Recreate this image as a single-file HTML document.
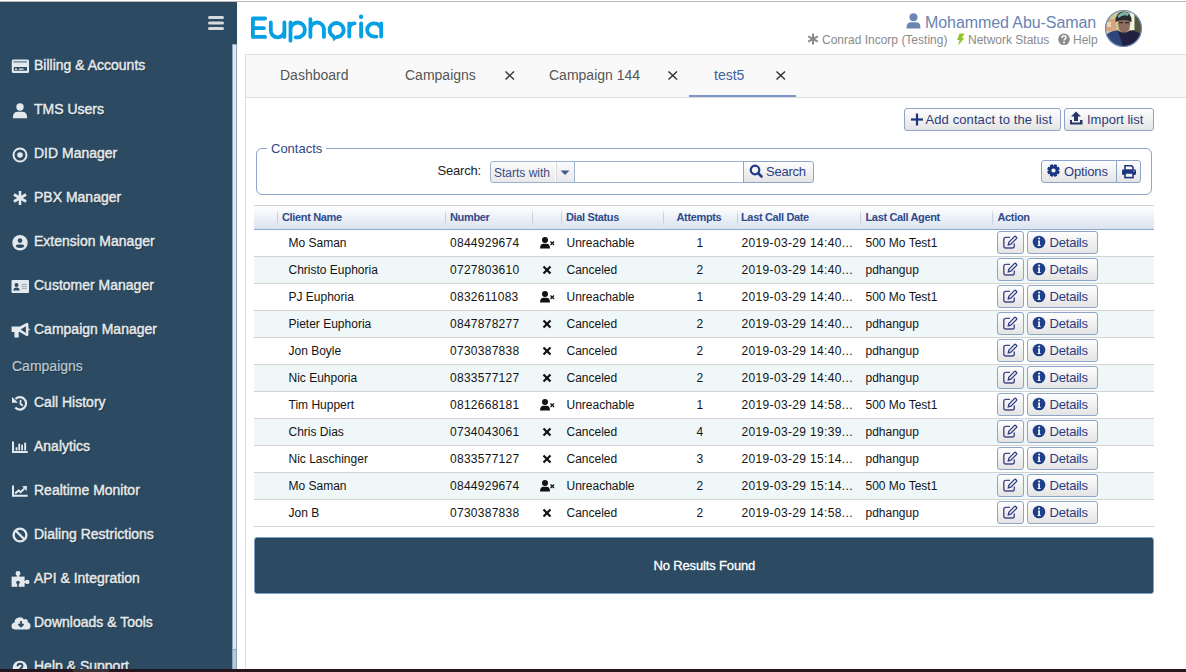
<!DOCTYPE html>
<html><head><meta charset="utf-8"><style>
*{box-sizing:border-box;margin:0;padding:0}
html,body{width:1186px;height:672px;overflow:hidden;background:#fff;font-family:"Liberation Sans",sans-serif}
body{position:relative}
.abs{position:absolute;white-space:nowrap}
svg{position:absolute;overflow:visible}
.mi{position:absolute;white-space:nowrap;color:#e4e9ed;text-shadow:1px 1px 1px rgba(0,0,0,.45);-webkit-text-stroke:0.45px #e4e9ed}
.btn{position:absolute;border:1px solid #8ea5c9;border-radius:3px;background:linear-gradient(#fefefe,#e4e4e4)}
.tx{color:#3a3f6e}
.th{position:absolute;white-space:nowrap;font-weight:bold;color:#2f4a8a;letter-spacing:-0.35px}
.sep{position:absolute;top:209px;width:1px;height:18px;background:linear-gradient(rgba(200,210,225,0),#c5cedb 35%,#c5cedb 65%,rgba(200,210,225,0))}
.row{position:absolute;left:254px;width:900px;height:27px;border-bottom:1px solid #d3d3d3}
.alt{background:#eff7f9}
.td{position:absolute;white-space:nowrap;color:#141414}
</style></head><body>
<div class="abs" style="left:0;top:1px;width:1186px;height:1px;background:#b9b6b9"></div>
<div class="abs" style="left:0;top:2px;width:237px;height:667px;background:#2c4b62"></div>
<svg style="left:206px;top:14px" width="20" height="18"><g stroke="#d5dadd" stroke-width="3" stroke-linecap="round"><line x1="3.5" y1="3.5" x2="16.5" y2="3.5"/><line x1="3.5" y1="9" x2="16.5" y2="9"/><line x1="3.5" y1="14.5" x2="16.5" y2="14.5"/></g></svg>
<div class="abs" style="left:232px;top:44px;width:5px;height:625px;background:#e8e6e7;border:1px solid #87a6bd;border-bottom:none"></div>
<div class="abs" style="left:233px;top:649px;width:3px;height:20px;background:#b8c9d5;border-top:1px solid #87a6bd"></div>
<svg style="left:11px;top:59px" width="19" height="15"><rect x="0.8" y="0.6" width="17.2" height="13.3" rx="1.5" fill="#e4e9ed"/><rect x="2.5" y="2.1" width="13.5" height="1.6" fill="#2c4b62" opacity="0.55"/><rect x="2.8" y="8" width="13.2" height="3.7" fill="#2c4b62"/><rect x="3.9" y="9.5" width="2.4" height="1.3" fill="#e4e9ed"/><rect x="8" y="9.5" width="4.5" height="1.3" fill="#e4e9ed"/></svg>
<div class="mi" style="left:34px;top:58px;font-size:14px;line-height:14px;">Billing &amp; Accounts</div>
<svg style="left:11px;top:103px" width="19" height="15"><circle cx="9" cy="4" r="3.7" fill="#e4e9ed"/><path d="M1.8 15.3 Q1.8 8.7 6.3 8.7 L11.7 8.7 Q16.2 8.7 16.2 15.3 Z" fill="#e4e9ed"/></svg>
<div class="mi" style="left:34px;top:102px;font-size:14px;line-height:14px;">TMS Users</div>
<svg style="left:11px;top:146.5px" width="19" height="16"><circle cx="9" cy="8" r="6.5" fill="none" stroke="#e4e9ed" stroke-width="2"/><circle cx="9" cy="8" r="2.8" fill="#e4e9ed"/></svg>
<div class="mi" style="left:34px;top:146px;font-size:14px;line-height:14px;">DID Manager</div>
<svg style="left:11px;top:190px" width="19" height="16"><g stroke="#e4e9ed" stroke-width="2.6" stroke-linecap="butt"><line x1="9" y1="1" x2="9" y2="15"/><line x1="2.9" y1="4.5" x2="15.1" y2="11.5"/><line x1="2.9" y1="11.5" x2="15.1" y2="4.5"/></g></svg>
<div class="mi" style="left:34px;top:190px;font-size:14px;line-height:14px;">PBX Manager</div>
<svg style="left:11px;top:234.5px" width="19" height="16"><circle cx="9" cy="7.7" r="7.7" fill="#e4e9ed"/><circle cx="9" cy="5.6" r="2.3" fill="#2c4b62"/><path d="M4.6 11.4 Q5 9.4 7 9.4 L11 9.4 Q13 9.4 13.4 11.4 Q9 14.5 4.6 11.4Z" fill="#2c4b62"/></svg>
<div class="mi" style="left:34px;top:234px;font-size:14px;line-height:14px;">Extension Manager</div>
<svg style="left:11px;top:279.5px" width="19" height="14"><rect x="0.5" y="0" width="17.5" height="13" rx="1" fill="#e4e9ed"/><circle cx="5.5" cy="5" r="2" fill="#2c4b62"/><path d="M2.2 10.5 Q2.5 7.5 5.5 7.5 Q8.5 7.5 8.8 10.5Z" fill="#2c4b62"/><rect x="10.5" y="3.8" width="5.5" height="1.2" fill="#a8b4be"/><rect x="10.5" y="5.8" width="5.5" height="1.2" fill="#a8b4be"/><rect x="10.5" y="7.8" width="5.5" height="1.2" fill="#a8b4be"/></svg>
<div class="mi" style="left:34px;top:278px;font-size:14px;line-height:14px;">Customer Manager</div>
<svg style="left:11px;top:322px" width="19" height="17"><path d="M0.6 4.4 L8.8 4.4 L15.5 1 Q17.4 0.4 17.4 2.5 L17.4 12.4 Q17.4 14.5 15.5 13.9 L8.8 9.9 L7.7 9.9 L7.7 15.6 L3.4 15.6 L3.4 9.9 L0.6 9.9 Z" fill="#e4e9ed"/><circle cx="17.9" cy="7.5" r="0.9" fill="#e4e9ed"/><path d="M9.6 7.4 L14.9 4.3 L14.9 10.9 Z" fill="#2c4b62"/></svg>
<div class="mi" style="left:34px;top:322px;font-size:14px;line-height:14px;">Campaign Manager</div>
<svg style="left:11px;top:395px" width="19" height="17"><path d="M4.5 4.0 A6.2 6.2 0 1 1 4.3 12.6" fill="none" stroke="#e4e9ed" stroke-width="2.2"/><path d="M1 2 L7 7.8 L1 7.8Z" fill="#e4e9ed"/><path d="M9.5 5 L9.5 9 L11.9 10.8" fill="none" stroke="#e4e9ed" stroke-width="1.7"/></svg>
<div class="mi" style="left:34px;top:395px;font-size:14px;line-height:14px;">Call History</div>
<svg style="left:11px;top:440px" width="19" height="15"><path d="M2 1.6 L2 12 L16.7 12" fill="none" stroke="#e4e9ed" stroke-width="2"/><rect x="4.6" y="7.2" width="1.8" height="3.2" fill="#e4e9ed"/><rect x="7.3" y="3.7" width="1.8" height="6.7" fill="#e4e9ed"/><rect x="10.2" y="4.7" width="1.8" height="5.7" fill="#e4e9ed"/><rect x="13.2" y="2.7" width="1.9" height="7.7" fill="#e4e9ed"/></svg>
<div class="mi" style="left:34px;top:439px;font-size:14px;line-height:14px;">Analytics</div>
<svg style="left:11px;top:484px" width="19" height="15"><path d="M2 1.6 L2 11.8 L16.7 11.8" fill="none" stroke="#e4e9ed" stroke-width="2"/><path d="M4.1 9.6 L7.6 6.6 L9.7 8.1 L13.2 4.6" fill="none" stroke="#e4e9ed" stroke-width="2"/><path d="M11 2.3 L16 1.9 L15.6 6.9Z" fill="#e4e9ed"/></svg>
<div class="mi" style="left:34px;top:483px;font-size:14px;line-height:14px;">Realtime Monitor</div>
<svg style="left:11px;top:527px" width="19" height="16"><circle cx="9" cy="8" r="6.4" fill="none" stroke="#e4e9ed" stroke-width="2.4"/><line x1="4.5" y1="3.5" x2="13.5" y2="12.5" stroke="#e4e9ed" stroke-width="2.4"/></svg>
<div class="mi" style="left:34px;top:527px;font-size:14px;line-height:14px;">Dialing Restrictions</div>
<svg style="left:11px;top:570px" width="20" height="18"><rect x="0.6" y="6.6" width="13" height="10.2" fill="#e4e9ed"/><circle cx="7" cy="3.4" r="2.4" fill="#e4e9ed"/><rect x="5.9" y="4.5" width="2.2" height="2.5" fill="#e4e9ed"/><circle cx="16.3" cy="11.9" r="2.2" fill="#e4e9ed"/><rect x="13" y="10.9" width="2.5" height="2" fill="#e4e9ed"/><circle cx="7" cy="12.6" r="1.8" fill="#2c4b62"/><rect x="6.2" y="12.6" width="1.6" height="4.3" fill="#2c4b62"/></svg>
<div class="mi" style="left:34px;top:571px;font-size:14px;line-height:14px;">API &amp; Integration</div>
<svg style="left:11px;top:615px" width="21" height="16"><path d="M4.5 14.5 Q0.5 14.5 0.5 11 Q0.5 8 3.5 7.5 Q3.5 3.5 7.5 2.5 Q11 1.5 13 4.5 Q14.5 3.5 16 4.5 Q17 5.5 16.8 7.3 Q19.5 8 19.5 11 Q19.5 14.5 16 14.5Z" fill="#e4e9ed"/><path d="M10 6 L10 11 M7.5 9 L10 11.5 L12.5 9" fill="none" stroke="#2c4b62" stroke-width="1.8"/></svg>
<div class="mi" style="left:34px;top:615px;font-size:14px;line-height:14px;">Downloads &amp; Tools</div>
<svg style="left:11px;top:659.5px" width="19" height="16"><circle cx="9" cy="8" r="7.3" fill="#e4e9ed"/><path d="M6.5 6.3 Q6.5 3.8 9 3.8 Q11.5 3.8 11.5 6 Q11.5 7.3 9.8 8 Q9 8.4 9 9.5" fill="none" stroke="#2c4b62" stroke-width="1.9"/><circle cx="9" cy="12" r="1.2" fill="#2c4b62"/></svg>
<div class="mi" style="left:34px;top:659px;font-size:14px;line-height:14px;">Help &amp; Support</div>
<div class="abs" style="left:12px;top:359px;font-size:14px;line-height:14px;color:#bcc8d1;text-shadow:1px 1px 1px rgba(0,0,0,.35);-webkit-text-stroke:0.2px #bcc8d1">Campaigns</div>
<div class="abs" style="left:245px;top:54px;width:1px;height:615px;background:#dedede"></div>
<svg style="left:249px;top:12px" width="140" height="34" viewBox="0 0 140 34"><g fill="none" stroke="#04a0e3" stroke-width="3.8" stroke-linecap="round" stroke-linejoin="round">
<path d="M16.1 6.5 L3.9 6.5 L3.9 24.9 L16.1 24.9 M3.9 16.2 L14.9 16.2"/>
<path d="M21.8 10.5 L21.8 18.5 A6.8 6.8 0 0 0 35.4 18.5 M35.4 10.5 L35.4 24.9"/>
<path d="M41.5 10.5 L41.5 28.7 M41.5 17.9 A7.2 7.4 0 1 1 48.7 25.3 L46.6 25.3"/>
<path d="M61.4 7.1 L61.4 24.9 M61.4 17.25 A6.75 6.75 0 0 1 74.9 17.25 L74.9 24.9"/>
<path d="M84 24 A7 7 0 1 1 88 25"/>
<path d="M100.3 11.3 L100.3 24.6 M100.3 17 Q100.3 11.3 105.6 11.3"/>
<path d="M112.1 11.3 L112.1 24.6"/>
<path d="M132.2 11.3 L132.2 24.6 M132.2 17.95 A7 6.65 0 1 0 125.2 24.6 L127.5 24.6"/>
</g><path d="M82.5 23 L89 25 L84.5 29.5 Z" fill="#04a0e3"/><circle cx="112.1" cy="4.8" r="2.2" fill="#04a0e3"/></svg>
<svg style="left:906px;top:13px" width="16" height="16"><circle cx="7.5" cy="4.2" r="4" fill="#6c86b3"/><path d="M0.5 15.5 Q0.5 9.2 4.5 9.2 L10.5 9.2 Q14.5 9.2 14.5 15.5 Z" fill="#6c86b3"/></svg>
<div class="abs" style="left:925px;top:15px;font-size:16px;line-height:16px;color:#6a84b2;letter-spacing:-0.08px">Mohammed Abu-Saman</div>
<svg style="left:807px;top:33px" width="13" height="13"><g stroke="#8a8a8a" stroke-width="2"><line x1="6" y1="0.5" x2="6" y2="11.5"/><line x1="1.2" y1="3.3" x2="10.8" y2="8.7"/><line x1="1.2" y1="8.7" x2="10.8" y2="3.3"/></g></svg>
<div class="abs" style="left:822px;top:34px;font-size:12px;line-height:12px;color:#8a8a8a">Conrad Incorp (Testing)</div>
<svg style="left:956px;top:33px" width="9" height="13"><path d="M3.5 0.5 L8.5 0.5 L6 5 L8.5 5 L2 12.5 L3.5 7 L1 7 Z" fill="#93c532"/></svg>
<div class="abs" style="left:968px;top:34px;font-size:12px;line-height:12px;color:#8a8a8a">Network Status</div>
<svg style="left:1058px;top:33px" width="13" height="13"><circle cx="6" cy="6.3" r="5.8" fill="#8a8a8a"/><path d="M4 5 Q4 2.8 6 2.8 Q8 2.8 8 4.6 Q8 5.7 6.7 6.3 Q6 6.7 6 7.6" fill="none" stroke="#fff" stroke-width="1.5"/><circle cx="6" cy="9.5" r="0.95" fill="#fff"/></svg>
<div class="abs" style="left:1073px;top:34px;font-size:12px;line-height:12px;color:#8a8a8a">Help</div>
<svg style="left:1105px;top:10px" width="37" height="37" viewBox="0 0 37 37"><defs><clipPath id="av"><circle cx="18.5" cy="18.5" r="18"/></clipPath></defs>
<g clip-path="url(#av)"><rect width="37" height="37" fill="#c9c58e"/><rect x="0" y="0" width="12" height="37" fill="#d2c596"/>
<rect x="1" y="9" width="10" height="12" fill="#d49a7a" opacity="0.75"/><rect x="2" y="12" width="4" height="5" fill="#e9d6b0"/>
<rect x="27" y="0" width="10" height="37" fill="#55553f"/><rect x="25" y="3" width="4.5" height="17" fill="#f2f3df"/>
<path d="M13 10 Q12.5 22 19 24 Q25.5 22 25.5 10Z" fill="#8f6e60"/><rect x="14" y="12" width="4" height="1.3" fill="#3a2a28"/><rect x="20" y="12" width="4" height="1.3" fill="#3a2a28"/>
<path d="M10.5 12 Q10 2 19 1.5 Q27 2 26.5 12 Q19 8 10.5 12Z" fill="#2a2c31"/><path d="M12.5 6 Q17 0 24 3 L23 6 Q18 4 13.5 8Z" fill="#78b3a4"/>
<path d="M-1 37 L-1 27 Q5 21 13 20.5 Q19 25 25 20.5 Q33 21 38 26 L38 37Z" fill="#221f40"/><path d="M-1 37 L-1 27 Q5 21 13 20.5 L18 37Z" fill="#30457a"/></g>
<circle cx="18.5" cy="18.5" r="18" fill="none" stroke="#6f8fb8" stroke-width="1.2"/></svg>
<div class="abs" style="left:245px;top:54px;width:941px;height:44px;background:#f9f9f9;border-top:1px solid #dedede;border-bottom:1px solid #dedede;border-left:1px solid #dedede"></div>
<div class="abs" style="left:280px;top:68px;font-size:14px;line-height:14px;color:#555">Dashboard</div>
<div class="abs" style="left:405px;top:68px;font-size:14px;line-height:14px;color:#555">Campaigns</div>
<div class="abs" style="left:549px;top:68px;font-size:14px;line-height:14px;color:#555">Campaign 144</div>
<div class="abs" style="left:714px;top:68px;font-size:14px;line-height:14px;color:#3f5d9b">test5</div>
<svg style="left:504.5px;top:71px" width="10" height="9.5"><g stroke="#333" stroke-width="1.4"><line x1="0.5" y1="0.5" x2="9" y2="8.5"/><line x1="9" y1="0.5" x2="0.5" y2="8.5"/></g></svg>
<svg style="left:668px;top:71px" width="10" height="9.5"><g stroke="#333" stroke-width="1.4"><line x1="0.5" y1="0.5" x2="9" y2="8.5"/><line x1="9" y1="0.5" x2="0.5" y2="8.5"/></g></svg>
<svg style="left:775.5px;top:71px" width="10" height="9.5"><g stroke="#333" stroke-width="1.4"><line x1="0.5" y1="0.5" x2="9" y2="8.5"/><line x1="9" y1="0.5" x2="0.5" y2="8.5"/></g></svg>
<div class="abs" style="left:689px;top:95px;width:107px;height:2px;background:#7c97c6"></div>
<div class="btn" style="left:904px;top:108px;width:157px;height:23px"></div>
<svg style="left:910.5px;top:112.5px" width="13" height="13"><g stroke="#1f3580" stroke-width="2.2"><line x1="6" y1="0.5" x2="6" y2="12.5"/><line x1="0" y1="6.5" x2="12" y2="6.5"/></g></svg>
<div class="abs" style="left:925.5px;top:113px;font-size:13px;line-height:13px;color:#2e3a78;letter-spacing:0.1px">Add contact to the list</div>
<div class="btn" style="left:1064px;top:108px;width:90px;height:23px"></div>
<svg style="left:1069px;top:111px" width="15" height="15"><path d="M7 0.5 L12 5.5 L9 5.5 L9 10 L5 10 L5 5.5 L2 5.5Z" fill="#26356b"/><path d="M1 9 L1 13.5 L13.5 13.5 L13.5 9 L11 9 L11 11.5 L3 11.5 L3 9Z" fill="#26356b"/></svg>
<div class="abs" style="left:1087px;top:113px;font-size:13px;line-height:13px;color:#2e3a78">Import list</div>
<div class="abs" style="left:256px;top:148px;width:896px;height:47px;border:1px solid #8ea6ca;border-radius:6px"></div>
<div class="abs" style="left:267px;top:146px;width:59px;height:4px;background:#fff"></div>
<div class="abs" style="left:271px;top:142px;font-size:13px;line-height:13px;color:#2f4785">Contacts</div>
<div class="abs" style="left:437.5px;top:164px;font-size:13px;line-height:13px;color:#222;letter-spacing:-0.2px">Search:</div>
<div class="abs" style="left:490px;top:161px;width:85px;height:22px;border:1px solid #9db2d2;border-radius:3px 0 0 3px;background:linear-gradient(#fbfbfb,#e9e9e9)"></div>
<div class="abs" style="left:555px;top:162px;width:2px;height:20px;border-left:1px solid #fff;background:#dadada"></div>
<div class="abs" style="left:494px;top:166.5px;font-size:12px;line-height:12px;color:#3c4a84">Starts with</div>
<svg style="left:560px;top:170px" width="12" height="8"><path d="M0.5 0.5 L9.5 0.5 L5 5Z" fill="#44578a"/></svg>
<div class="abs" style="left:574px;top:161px;width:170px;height:22px;border:1px solid #9db2d2;background:#fff"></div>
<div class="btn" style="left:743px;top:161px;width:71px;height:22px;border-radius:0 3px 3px 0"></div>
<svg style="left:749px;top:164px" width="15" height="15"><circle cx="6" cy="6" r="4.3" fill="none" stroke="#1f3a8a" stroke-width="2.2"/><line x1="9" y1="9" x2="12.5" y2="12.5" stroke="#1f3a8a" stroke-width="2.6" stroke-linecap="round"/></svg>
<div class="abs" style="left:766px;top:165px;font-size:13px;line-height:13px;color:#2e3a80;letter-spacing:-0.25px">Search</div>
<div class="btn" style="left:1041px;top:160px;width:76px;height:23px;border-radius:3px 0 0 3px"></div>
<div class="btn" style="left:1116px;top:160px;width:25px;height:23px;border-radius:0 3px 3px 0"></div>
<svg style="left:1047px;top:164px" width="14" height="14"><g fill="#1f3580"><circle cx="6.5" cy="6.5" r="5"/><rect x="4.9" y="0.2" width="3.2" height="12.6" rx="0.6" transform="rotate(22.5 6.5 6.5)"/><rect x="4.9" y="0.2" width="3.2" height="12.6" rx="0.6" transform="rotate(67.5 6.5 6.5)"/><rect x="4.9" y="0.2" width="3.2" height="12.6" rx="0.6" transform="rotate(112.5 6.5 6.5)"/><rect x="4.9" y="0.2" width="3.2" height="12.6" rx="0.6" transform="rotate(157.5 6.5 6.5)"/></g><circle cx="6.5" cy="6.5" r="2.1" fill="#f2f2f2"/></svg>
<div class="abs" style="left:1064px;top:165px;font-size:13px;line-height:13px;color:#2e3a80;letter-spacing:-0.15px">Options</div>
<svg style="left:1122px;top:165px" width="15" height="14"><path d="M3 4.5 L3 0.8 L9.5 0.8 L11 2.3 L11 4.5" fill="#fff" stroke="#1f3580" stroke-width="1.6"/><rect x="0" y="4.3" width="14" height="5.8" rx="1.5" fill="#1f3580"/><rect x="3" y="8" width="8" height="4.6" fill="#f4f4f4" stroke="#1f3580" stroke-width="1.6"/><circle cx="12" cy="6" r="0.6" fill="#fff"/></svg>
<div class="abs" style="left:254px;top:205px;width:900px;height:25px;border-top:1px solid #d0d0d0;border-bottom:1px solid #8eaad3;background:linear-gradient(#ffffff,#dae3f0)"></div>
<div class="sep" style="left:277px"></div>
<div class="sep" style="left:445px"></div>
<div class="sep" style="left:532px"></div>
<div class="sep" style="left:561px"></div>
<div class="sep" style="left:663px"></div>
<div class="sep" style="left:737px"></div>
<div class="sep" style="left:860px"></div>
<div class="sep" style="left:992px"></div>
<div class="th" style="left:282px;top:212px;font-size:11px;line-height:11px;">Client Name</div>
<div class="th" style="left:450px;top:212px;font-size:11px;line-height:11px;">Number</div>
<div class="th" style="left:566px;top:212px;font-size:11px;line-height:11px;">Dial Status</div>
<div class="th" style="left:676.5px;top:212px;font-size:11px;line-height:11px;">Attempts</div>
<div class="th" style="left:741px;top:212px;font-size:11px;line-height:11px;">Last Call Date</div>
<div class="th" style="left:865.5px;top:212px;font-size:11px;line-height:11px;">Last Call Agent</div>
<div class="th" style="left:997.5px;top:212px;font-size:11px;line-height:11px;">Action</div>
<div class="row" style="top:230px"></div>
<div class="td" style="left:288.5px;top:237px;font-size:12px;line-height:12px;">Mo Saman</div>
<div class="td" style="left:450px;top:237px;font-size:12px;line-height:12px;letter-spacing:0.27px">0844929674</div>
<svg style="left:540px;top:237px" width="15" height="12"><circle cx="5" cy="3" r="3" fill="#111"/><path d="M0 11.5 Q0 6.8 3.5 6.8 L6.5 6.8 Q10 6.8 10 11.5Z" fill="#111"/><g stroke="#111" stroke-width="1.2"><line x1="10.5" y1="4.5" x2="14" y2="8"/><line x1="14" y1="4.5" x2="10.5" y2="8"/></g></svg>
<div class="td" style="left:566.5px;top:237px;font-size:12px;line-height:12px;">Unreachable</div>
<div class="td" style="left:696.5px;top:237px;font-size:12px;line-height:12px;">1</div>
<div class="td" style="left:741.5px;top:237px;font-size:12px;line-height:12px;letter-spacing:0.35px">2019-03-29 14:40...</div>
<div class="td" style="left:865.5px;top:237px;font-size:12px;line-height:12px;">500 Mo Test1</div>
<div class="btn" style="left:997px;top:231px;width:27px;height:23px"></div>
<svg style="left:1002px;top:235px" width="16" height="15"><path d="M8 2.4 L3.8 2.4 Q1.8 2.4 1.8 4.4 L1.8 11 Q1.8 13 3.8 13 L10.3 13 Q12.3 13 12.3 11 L12.3 8.5" fill="none" stroke="#46498a" stroke-width="1.4"/><path d="M6.3 9.8 L6.8 7.2 L12.4 1.6 Q13.1 0.9 13.8 1.6 L14.4 2.2 Q15.1 2.9 14.4 3.6 L8.8 9.2Z" fill="none" stroke="#2e3a80" stroke-width="1.3"/></svg>
<div class="btn" style="left:1027px;top:231px;width:71px;height:23px"></div>
<svg style="left:1032px;top:235px" width="14" height="14"><circle cx="7" cy="7" r="6.3" fill="#1f3f8a"/><path d="M6 5.6 L7.9 5.6 L7.9 10 L8.6 10 L8.6 11 L5.6 11 L5.6 10 L6.3 10 L6.3 6.6 L6 6.6Z" fill="#fff"/><circle cx="7.1" cy="3.6" r="1" fill="#fff"/></svg>
<div class="abs" style="left:1049.5px;top:236px;font-size:13px;line-height:13px;color:#2e3a80;letter-spacing:-0.2px">Details</div>
<div class="row alt" style="top:257px"></div>
<div class="td" style="left:288.5px;top:264px;font-size:12px;line-height:12px;">Christo Euphoria</div>
<div class="td" style="left:450px;top:264px;font-size:12px;line-height:12px;letter-spacing:0.27px">0727803610</div>
<svg style="left:542.5px;top:266px" width="8.5" height="8.5"><g stroke="#111" stroke-width="2.2"><line x1="0.5" y1="0.5" x2="7.5" y2="7.5"/><line x1="7.5" y1="0.5" x2="0.5" y2="7.5"/></g></svg>
<div class="td" style="left:566.5px;top:264px;font-size:12px;line-height:12px;">Canceled</div>
<div class="td" style="left:696.5px;top:264px;font-size:12px;line-height:12px;">2</div>
<div class="td" style="left:741.5px;top:264px;font-size:12px;line-height:12px;letter-spacing:0.35px">2019-03-29 14:40...</div>
<div class="td" style="left:865.5px;top:264px;font-size:12px;line-height:12px;">pdhangup</div>
<div class="btn" style="left:997px;top:258px;width:27px;height:23px"></div>
<svg style="left:1002px;top:262px" width="16" height="15"><path d="M8 2.4 L3.8 2.4 Q1.8 2.4 1.8 4.4 L1.8 11 Q1.8 13 3.8 13 L10.3 13 Q12.3 13 12.3 11 L12.3 8.5" fill="none" stroke="#46498a" stroke-width="1.4"/><path d="M6.3 9.8 L6.8 7.2 L12.4 1.6 Q13.1 0.9 13.8 1.6 L14.4 2.2 Q15.1 2.9 14.4 3.6 L8.8 9.2Z" fill="none" stroke="#2e3a80" stroke-width="1.3"/></svg>
<div class="btn" style="left:1027px;top:258px;width:71px;height:23px"></div>
<svg style="left:1032px;top:262px" width="14" height="14"><circle cx="7" cy="7" r="6.3" fill="#1f3f8a"/><path d="M6 5.6 L7.9 5.6 L7.9 10 L8.6 10 L8.6 11 L5.6 11 L5.6 10 L6.3 10 L6.3 6.6 L6 6.6Z" fill="#fff"/><circle cx="7.1" cy="3.6" r="1" fill="#fff"/></svg>
<div class="abs" style="left:1049.5px;top:263px;font-size:13px;line-height:13px;color:#2e3a80;letter-spacing:-0.2px">Details</div>
<div class="row" style="top:284px"></div>
<div class="td" style="left:288.5px;top:291px;font-size:12px;line-height:12px;">PJ Euphoria</div>
<div class="td" style="left:450px;top:291px;font-size:12px;line-height:12px;letter-spacing:0.27px">0832611083</div>
<svg style="left:540px;top:291px" width="15" height="12"><circle cx="5" cy="3" r="3" fill="#111"/><path d="M0 11.5 Q0 6.8 3.5 6.8 L6.5 6.8 Q10 6.8 10 11.5Z" fill="#111"/><g stroke="#111" stroke-width="1.2"><line x1="10.5" y1="4.5" x2="14" y2="8"/><line x1="14" y1="4.5" x2="10.5" y2="8"/></g></svg>
<div class="td" style="left:566.5px;top:291px;font-size:12px;line-height:12px;">Unreachable</div>
<div class="td" style="left:696.5px;top:291px;font-size:12px;line-height:12px;">1</div>
<div class="td" style="left:741.5px;top:291px;font-size:12px;line-height:12px;letter-spacing:0.35px">2019-03-29 14:40...</div>
<div class="td" style="left:865.5px;top:291px;font-size:12px;line-height:12px;">500 Mo Test1</div>
<div class="btn" style="left:997px;top:285px;width:27px;height:23px"></div>
<svg style="left:1002px;top:289px" width="16" height="15"><path d="M8 2.4 L3.8 2.4 Q1.8 2.4 1.8 4.4 L1.8 11 Q1.8 13 3.8 13 L10.3 13 Q12.3 13 12.3 11 L12.3 8.5" fill="none" stroke="#46498a" stroke-width="1.4"/><path d="M6.3 9.8 L6.8 7.2 L12.4 1.6 Q13.1 0.9 13.8 1.6 L14.4 2.2 Q15.1 2.9 14.4 3.6 L8.8 9.2Z" fill="none" stroke="#2e3a80" stroke-width="1.3"/></svg>
<div class="btn" style="left:1027px;top:285px;width:71px;height:23px"></div>
<svg style="left:1032px;top:289px" width="14" height="14"><circle cx="7" cy="7" r="6.3" fill="#1f3f8a"/><path d="M6 5.6 L7.9 5.6 L7.9 10 L8.6 10 L8.6 11 L5.6 11 L5.6 10 L6.3 10 L6.3 6.6 L6 6.6Z" fill="#fff"/><circle cx="7.1" cy="3.6" r="1" fill="#fff"/></svg>
<div class="abs" style="left:1049.5px;top:290px;font-size:13px;line-height:13px;color:#2e3a80;letter-spacing:-0.2px">Details</div>
<div class="row alt" style="top:311px"></div>
<div class="td" style="left:288.5px;top:318px;font-size:12px;line-height:12px;">Pieter Euphoria</div>
<div class="td" style="left:450px;top:318px;font-size:12px;line-height:12px;letter-spacing:0.27px">0847878277</div>
<svg style="left:542.5px;top:320px" width="8.5" height="8.5"><g stroke="#111" stroke-width="2.2"><line x1="0.5" y1="0.5" x2="7.5" y2="7.5"/><line x1="7.5" y1="0.5" x2="0.5" y2="7.5"/></g></svg>
<div class="td" style="left:566.5px;top:318px;font-size:12px;line-height:12px;">Canceled</div>
<div class="td" style="left:696.5px;top:318px;font-size:12px;line-height:12px;">2</div>
<div class="td" style="left:741.5px;top:318px;font-size:12px;line-height:12px;letter-spacing:0.35px">2019-03-29 14:40...</div>
<div class="td" style="left:865.5px;top:318px;font-size:12px;line-height:12px;">pdhangup</div>
<div class="btn" style="left:997px;top:312px;width:27px;height:23px"></div>
<svg style="left:1002px;top:316px" width="16" height="15"><path d="M8 2.4 L3.8 2.4 Q1.8 2.4 1.8 4.4 L1.8 11 Q1.8 13 3.8 13 L10.3 13 Q12.3 13 12.3 11 L12.3 8.5" fill="none" stroke="#46498a" stroke-width="1.4"/><path d="M6.3 9.8 L6.8 7.2 L12.4 1.6 Q13.1 0.9 13.8 1.6 L14.4 2.2 Q15.1 2.9 14.4 3.6 L8.8 9.2Z" fill="none" stroke="#2e3a80" stroke-width="1.3"/></svg>
<div class="btn" style="left:1027px;top:312px;width:71px;height:23px"></div>
<svg style="left:1032px;top:316px" width="14" height="14"><circle cx="7" cy="7" r="6.3" fill="#1f3f8a"/><path d="M6 5.6 L7.9 5.6 L7.9 10 L8.6 10 L8.6 11 L5.6 11 L5.6 10 L6.3 10 L6.3 6.6 L6 6.6Z" fill="#fff"/><circle cx="7.1" cy="3.6" r="1" fill="#fff"/></svg>
<div class="abs" style="left:1049.5px;top:317px;font-size:13px;line-height:13px;color:#2e3a80;letter-spacing:-0.2px">Details</div>
<div class="row" style="top:338px"></div>
<div class="td" style="left:288.5px;top:345px;font-size:12px;line-height:12px;">Jon Boyle</div>
<div class="td" style="left:450px;top:345px;font-size:12px;line-height:12px;letter-spacing:0.27px">0730387838</div>
<svg style="left:542.5px;top:347px" width="8.5" height="8.5"><g stroke="#111" stroke-width="2.2"><line x1="0.5" y1="0.5" x2="7.5" y2="7.5"/><line x1="7.5" y1="0.5" x2="0.5" y2="7.5"/></g></svg>
<div class="td" style="left:566.5px;top:345px;font-size:12px;line-height:12px;">Canceled</div>
<div class="td" style="left:696.5px;top:345px;font-size:12px;line-height:12px;">2</div>
<div class="td" style="left:741.5px;top:345px;font-size:12px;line-height:12px;letter-spacing:0.35px">2019-03-29 14:40...</div>
<div class="td" style="left:865.5px;top:345px;font-size:12px;line-height:12px;">pdhangup</div>
<div class="btn" style="left:997px;top:339px;width:27px;height:23px"></div>
<svg style="left:1002px;top:343px" width="16" height="15"><path d="M8 2.4 L3.8 2.4 Q1.8 2.4 1.8 4.4 L1.8 11 Q1.8 13 3.8 13 L10.3 13 Q12.3 13 12.3 11 L12.3 8.5" fill="none" stroke="#46498a" stroke-width="1.4"/><path d="M6.3 9.8 L6.8 7.2 L12.4 1.6 Q13.1 0.9 13.8 1.6 L14.4 2.2 Q15.1 2.9 14.4 3.6 L8.8 9.2Z" fill="none" stroke="#2e3a80" stroke-width="1.3"/></svg>
<div class="btn" style="left:1027px;top:339px;width:71px;height:23px"></div>
<svg style="left:1032px;top:343px" width="14" height="14"><circle cx="7" cy="7" r="6.3" fill="#1f3f8a"/><path d="M6 5.6 L7.9 5.6 L7.9 10 L8.6 10 L8.6 11 L5.6 11 L5.6 10 L6.3 10 L6.3 6.6 L6 6.6Z" fill="#fff"/><circle cx="7.1" cy="3.6" r="1" fill="#fff"/></svg>
<div class="abs" style="left:1049.5px;top:344px;font-size:13px;line-height:13px;color:#2e3a80;letter-spacing:-0.2px">Details</div>
<div class="row alt" style="top:365px"></div>
<div class="td" style="left:288.5px;top:372px;font-size:12px;line-height:12px;">Nic Euhporia</div>
<div class="td" style="left:450px;top:372px;font-size:12px;line-height:12px;letter-spacing:0.27px">0833577127</div>
<svg style="left:542.5px;top:374px" width="8.5" height="8.5"><g stroke="#111" stroke-width="2.2"><line x1="0.5" y1="0.5" x2="7.5" y2="7.5"/><line x1="7.5" y1="0.5" x2="0.5" y2="7.5"/></g></svg>
<div class="td" style="left:566.5px;top:372px;font-size:12px;line-height:12px;">Canceled</div>
<div class="td" style="left:696.5px;top:372px;font-size:12px;line-height:12px;">2</div>
<div class="td" style="left:741.5px;top:372px;font-size:12px;line-height:12px;letter-spacing:0.35px">2019-03-29 14:40...</div>
<div class="td" style="left:865.5px;top:372px;font-size:12px;line-height:12px;">pdhangup</div>
<div class="btn" style="left:997px;top:366px;width:27px;height:23px"></div>
<svg style="left:1002px;top:370px" width="16" height="15"><path d="M8 2.4 L3.8 2.4 Q1.8 2.4 1.8 4.4 L1.8 11 Q1.8 13 3.8 13 L10.3 13 Q12.3 13 12.3 11 L12.3 8.5" fill="none" stroke="#46498a" stroke-width="1.4"/><path d="M6.3 9.8 L6.8 7.2 L12.4 1.6 Q13.1 0.9 13.8 1.6 L14.4 2.2 Q15.1 2.9 14.4 3.6 L8.8 9.2Z" fill="none" stroke="#2e3a80" stroke-width="1.3"/></svg>
<div class="btn" style="left:1027px;top:366px;width:71px;height:23px"></div>
<svg style="left:1032px;top:370px" width="14" height="14"><circle cx="7" cy="7" r="6.3" fill="#1f3f8a"/><path d="M6 5.6 L7.9 5.6 L7.9 10 L8.6 10 L8.6 11 L5.6 11 L5.6 10 L6.3 10 L6.3 6.6 L6 6.6Z" fill="#fff"/><circle cx="7.1" cy="3.6" r="1" fill="#fff"/></svg>
<div class="abs" style="left:1049.5px;top:371px;font-size:13px;line-height:13px;color:#2e3a80;letter-spacing:-0.2px">Details</div>
<div class="row" style="top:392px"></div>
<div class="td" style="left:288.5px;top:399px;font-size:12px;line-height:12px;">Tim Huppert</div>
<div class="td" style="left:450px;top:399px;font-size:12px;line-height:12px;letter-spacing:0.27px">0812668181</div>
<svg style="left:540px;top:399px" width="15" height="12"><circle cx="5" cy="3" r="3" fill="#111"/><path d="M0 11.5 Q0 6.8 3.5 6.8 L6.5 6.8 Q10 6.8 10 11.5Z" fill="#111"/><g stroke="#111" stroke-width="1.2"><line x1="10.5" y1="4.5" x2="14" y2="8"/><line x1="14" y1="4.5" x2="10.5" y2="8"/></g></svg>
<div class="td" style="left:566.5px;top:399px;font-size:12px;line-height:12px;">Unreachable</div>
<div class="td" style="left:696.5px;top:399px;font-size:12px;line-height:12px;">1</div>
<div class="td" style="left:741.5px;top:399px;font-size:12px;line-height:12px;letter-spacing:0.35px">2019-03-29 14:58...</div>
<div class="td" style="left:865.5px;top:399px;font-size:12px;line-height:12px;">500 Mo Test1</div>
<div class="btn" style="left:997px;top:393px;width:27px;height:23px"></div>
<svg style="left:1002px;top:397px" width="16" height="15"><path d="M8 2.4 L3.8 2.4 Q1.8 2.4 1.8 4.4 L1.8 11 Q1.8 13 3.8 13 L10.3 13 Q12.3 13 12.3 11 L12.3 8.5" fill="none" stroke="#46498a" stroke-width="1.4"/><path d="M6.3 9.8 L6.8 7.2 L12.4 1.6 Q13.1 0.9 13.8 1.6 L14.4 2.2 Q15.1 2.9 14.4 3.6 L8.8 9.2Z" fill="none" stroke="#2e3a80" stroke-width="1.3"/></svg>
<div class="btn" style="left:1027px;top:393px;width:71px;height:23px"></div>
<svg style="left:1032px;top:397px" width="14" height="14"><circle cx="7" cy="7" r="6.3" fill="#1f3f8a"/><path d="M6 5.6 L7.9 5.6 L7.9 10 L8.6 10 L8.6 11 L5.6 11 L5.6 10 L6.3 10 L6.3 6.6 L6 6.6Z" fill="#fff"/><circle cx="7.1" cy="3.6" r="1" fill="#fff"/></svg>
<div class="abs" style="left:1049.5px;top:398px;font-size:13px;line-height:13px;color:#2e3a80;letter-spacing:-0.2px">Details</div>
<div class="row alt" style="top:419px"></div>
<div class="td" style="left:288.5px;top:426px;font-size:12px;line-height:12px;">Chris Dias</div>
<div class="td" style="left:450px;top:426px;font-size:12px;line-height:12px;letter-spacing:0.27px">0734043061</div>
<svg style="left:542.5px;top:428px" width="8.5" height="8.5"><g stroke="#111" stroke-width="2.2"><line x1="0.5" y1="0.5" x2="7.5" y2="7.5"/><line x1="7.5" y1="0.5" x2="0.5" y2="7.5"/></g></svg>
<div class="td" style="left:566.5px;top:426px;font-size:12px;line-height:12px;">Canceled</div>
<div class="td" style="left:696.5px;top:426px;font-size:12px;line-height:12px;">4</div>
<div class="td" style="left:741.5px;top:426px;font-size:12px;line-height:12px;letter-spacing:0.35px">2019-03-29 19:39...</div>
<div class="td" style="left:865.5px;top:426px;font-size:12px;line-height:12px;">pdhangup</div>
<div class="btn" style="left:997px;top:420px;width:27px;height:23px"></div>
<svg style="left:1002px;top:424px" width="16" height="15"><path d="M8 2.4 L3.8 2.4 Q1.8 2.4 1.8 4.4 L1.8 11 Q1.8 13 3.8 13 L10.3 13 Q12.3 13 12.3 11 L12.3 8.5" fill="none" stroke="#46498a" stroke-width="1.4"/><path d="M6.3 9.8 L6.8 7.2 L12.4 1.6 Q13.1 0.9 13.8 1.6 L14.4 2.2 Q15.1 2.9 14.4 3.6 L8.8 9.2Z" fill="none" stroke="#2e3a80" stroke-width="1.3"/></svg>
<div class="btn" style="left:1027px;top:420px;width:71px;height:23px"></div>
<svg style="left:1032px;top:424px" width="14" height="14"><circle cx="7" cy="7" r="6.3" fill="#1f3f8a"/><path d="M6 5.6 L7.9 5.6 L7.9 10 L8.6 10 L8.6 11 L5.6 11 L5.6 10 L6.3 10 L6.3 6.6 L6 6.6Z" fill="#fff"/><circle cx="7.1" cy="3.6" r="1" fill="#fff"/></svg>
<div class="abs" style="left:1049.5px;top:425px;font-size:13px;line-height:13px;color:#2e3a80;letter-spacing:-0.2px">Details</div>
<div class="row" style="top:446px"></div>
<div class="td" style="left:288.5px;top:453px;font-size:12px;line-height:12px;">Nic Laschinger</div>
<div class="td" style="left:450px;top:453px;font-size:12px;line-height:12px;letter-spacing:0.27px">0833577127</div>
<svg style="left:542.5px;top:455px" width="8.5" height="8.5"><g stroke="#111" stroke-width="2.2"><line x1="0.5" y1="0.5" x2="7.5" y2="7.5"/><line x1="7.5" y1="0.5" x2="0.5" y2="7.5"/></g></svg>
<div class="td" style="left:566.5px;top:453px;font-size:12px;line-height:12px;">Canceled</div>
<div class="td" style="left:696.5px;top:453px;font-size:12px;line-height:12px;">3</div>
<div class="td" style="left:741.5px;top:453px;font-size:12px;line-height:12px;letter-spacing:0.35px">2019-03-29 15:14...</div>
<div class="td" style="left:865.5px;top:453px;font-size:12px;line-height:12px;">pdhangup</div>
<div class="btn" style="left:997px;top:447px;width:27px;height:23px"></div>
<svg style="left:1002px;top:451px" width="16" height="15"><path d="M8 2.4 L3.8 2.4 Q1.8 2.4 1.8 4.4 L1.8 11 Q1.8 13 3.8 13 L10.3 13 Q12.3 13 12.3 11 L12.3 8.5" fill="none" stroke="#46498a" stroke-width="1.4"/><path d="M6.3 9.8 L6.8 7.2 L12.4 1.6 Q13.1 0.9 13.8 1.6 L14.4 2.2 Q15.1 2.9 14.4 3.6 L8.8 9.2Z" fill="none" stroke="#2e3a80" stroke-width="1.3"/></svg>
<div class="btn" style="left:1027px;top:447px;width:71px;height:23px"></div>
<svg style="left:1032px;top:451px" width="14" height="14"><circle cx="7" cy="7" r="6.3" fill="#1f3f8a"/><path d="M6 5.6 L7.9 5.6 L7.9 10 L8.6 10 L8.6 11 L5.6 11 L5.6 10 L6.3 10 L6.3 6.6 L6 6.6Z" fill="#fff"/><circle cx="7.1" cy="3.6" r="1" fill="#fff"/></svg>
<div class="abs" style="left:1049.5px;top:452px;font-size:13px;line-height:13px;color:#2e3a80;letter-spacing:-0.2px">Details</div>
<div class="row alt" style="top:473px"></div>
<div class="td" style="left:288.5px;top:480px;font-size:12px;line-height:12px;">Mo Saman</div>
<div class="td" style="left:450px;top:480px;font-size:12px;line-height:12px;letter-spacing:0.27px">0844929674</div>
<svg style="left:540px;top:480px" width="15" height="12"><circle cx="5" cy="3" r="3" fill="#111"/><path d="M0 11.5 Q0 6.8 3.5 6.8 L6.5 6.8 Q10 6.8 10 11.5Z" fill="#111"/><g stroke="#111" stroke-width="1.2"><line x1="10.5" y1="4.5" x2="14" y2="8"/><line x1="14" y1="4.5" x2="10.5" y2="8"/></g></svg>
<div class="td" style="left:566.5px;top:480px;font-size:12px;line-height:12px;">Unreachable</div>
<div class="td" style="left:696.5px;top:480px;font-size:12px;line-height:12px;">2</div>
<div class="td" style="left:741.5px;top:480px;font-size:12px;line-height:12px;letter-spacing:0.35px">2019-03-29 15:14...</div>
<div class="td" style="left:865.5px;top:480px;font-size:12px;line-height:12px;">500 Mo Test1</div>
<div class="btn" style="left:997px;top:474px;width:27px;height:23px"></div>
<svg style="left:1002px;top:478px" width="16" height="15"><path d="M8 2.4 L3.8 2.4 Q1.8 2.4 1.8 4.4 L1.8 11 Q1.8 13 3.8 13 L10.3 13 Q12.3 13 12.3 11 L12.3 8.5" fill="none" stroke="#46498a" stroke-width="1.4"/><path d="M6.3 9.8 L6.8 7.2 L12.4 1.6 Q13.1 0.9 13.8 1.6 L14.4 2.2 Q15.1 2.9 14.4 3.6 L8.8 9.2Z" fill="none" stroke="#2e3a80" stroke-width="1.3"/></svg>
<div class="btn" style="left:1027px;top:474px;width:71px;height:23px"></div>
<svg style="left:1032px;top:478px" width="14" height="14"><circle cx="7" cy="7" r="6.3" fill="#1f3f8a"/><path d="M6 5.6 L7.9 5.6 L7.9 10 L8.6 10 L8.6 11 L5.6 11 L5.6 10 L6.3 10 L6.3 6.6 L6 6.6Z" fill="#fff"/><circle cx="7.1" cy="3.6" r="1" fill="#fff"/></svg>
<div class="abs" style="left:1049.5px;top:479px;font-size:13px;line-height:13px;color:#2e3a80;letter-spacing:-0.2px">Details</div>
<div class="row" style="top:500px"></div>
<div class="td" style="left:288.5px;top:507px;font-size:12px;line-height:12px;">Jon B</div>
<div class="td" style="left:450px;top:507px;font-size:12px;line-height:12px;letter-spacing:0.27px">0730387838</div>
<svg style="left:542.5px;top:509px" width="8.5" height="8.5"><g stroke="#111" stroke-width="2.2"><line x1="0.5" y1="0.5" x2="7.5" y2="7.5"/><line x1="7.5" y1="0.5" x2="0.5" y2="7.5"/></g></svg>
<div class="td" style="left:566.5px;top:507px;font-size:12px;line-height:12px;">Canceled</div>
<div class="td" style="left:696.5px;top:507px;font-size:12px;line-height:12px;">2</div>
<div class="td" style="left:741.5px;top:507px;font-size:12px;line-height:12px;letter-spacing:0.35px">2019-03-29 14:58...</div>
<div class="td" style="left:865.5px;top:507px;font-size:12px;line-height:12px;">pdhangup</div>
<div class="btn" style="left:997px;top:501px;width:27px;height:23px"></div>
<svg style="left:1002px;top:505px" width="16" height="15"><path d="M8 2.4 L3.8 2.4 Q1.8 2.4 1.8 4.4 L1.8 11 Q1.8 13 3.8 13 L10.3 13 Q12.3 13 12.3 11 L12.3 8.5" fill="none" stroke="#46498a" stroke-width="1.4"/><path d="M6.3 9.8 L6.8 7.2 L12.4 1.6 Q13.1 0.9 13.8 1.6 L14.4 2.2 Q15.1 2.9 14.4 3.6 L8.8 9.2Z" fill="none" stroke="#2e3a80" stroke-width="1.3"/></svg>
<div class="btn" style="left:1027px;top:501px;width:71px;height:23px"></div>
<svg style="left:1032px;top:505px" width="14" height="14"><circle cx="7" cy="7" r="6.3" fill="#1f3f8a"/><path d="M6 5.6 L7.9 5.6 L7.9 10 L8.6 10 L8.6 11 L5.6 11 L5.6 10 L6.3 10 L6.3 6.6 L6 6.6Z" fill="#fff"/><circle cx="7.1" cy="3.6" r="1" fill="#fff"/></svg>
<div class="abs" style="left:1049.5px;top:506px;font-size:13px;line-height:13px;color:#2e3a80;letter-spacing:-0.2px">Details</div>
<div class="abs" style="left:254px;top:537px;width:900px;height:57px;background:#2c4b62;border:1px solid #86a2c8;border-radius:3px;box-shadow:inset 0 0 0 1px #264760"></div>
<div class="abs" style="left:653.5px;top:559px;font-size:13px;line-height:13px;color:#fff;letter-spacing:-0.15px;-webkit-text-stroke:0.3px #fff">No Results Found</div>
<div class="abs" style="left:0;top:669px;width:1186px;height:3px;background:#24151f"></div><div class="abs" style="left:73px;top:669px;width:36px;height:3px;background:#3b3139"></div>
</body></html>
